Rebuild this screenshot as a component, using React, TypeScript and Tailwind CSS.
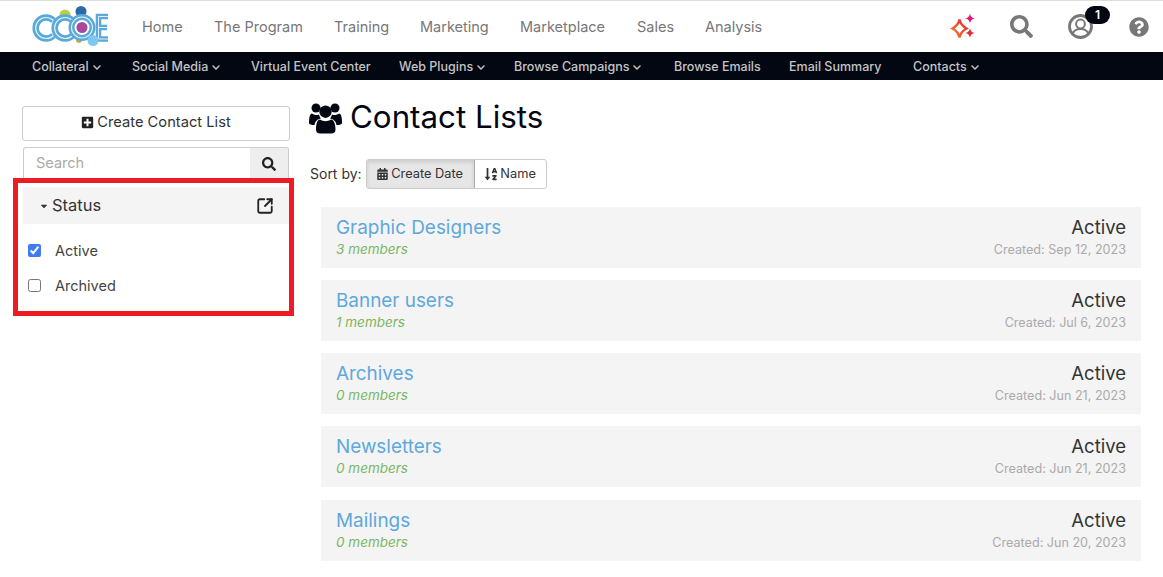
import { FaPlusSquare, FaSearch, FaCalendarAlt, FaSortAlphaDown, FaQuestionCircle, FaChevronDown, FaCaretDown } from "react-icons/fa";
import { LuSquareArrowOutUpRight } from "react-icons/lu";

const font = { fontFamily: "Inter, 'Noto Sans', sans-serif" };

function Logo() {
  const cArc = (cx: number) => `M ${cx + 7.5} 16.5 A 10.500 10.500 0 1 0 ${cx + 7.5} 31.500`;
  const e = "M78 12.500 H68.500 V35 H78 M68.500 23.500 H77";
  return (
    <svg width="80" height="46" viewBox="0 0 80 46" className="block">
      <circle cx="35" cy="11" r="5.500" fill="#b8cf3f" />
      <circle cx="51" cy="7.500" r="5.500" fill="#2b6aa6" />
      <circle cx="49" cy="36" r="3" fill="#d9a84a" />
      <g fill="none">
        <path d={cArc(16)} stroke="#5aa9d8" strokeWidth="6.500" />
        <path d={cArc(16)} stroke="#dff0fa" strokeWidth="1.200" />
        <path d={cArc(35)} stroke="#5aa9d8" strokeWidth="6.500" />
        <path d={cArc(35)} stroke="#dff0fa" strokeWidth="1.200" />
        <circle cx="52" cy="23.500" r="10.500" stroke="#5aa9d8" strokeWidth="6" />
        <circle cx="52" cy="23.500" r="10.500" stroke="#dff0fa" strokeWidth="1.100" />
        <path d={e} stroke="#5aa9d8" strokeWidth="5.500" />
        <path d={e} stroke="#dff0fa" strokeWidth="1" />
      </g>
      <circle cx="52" cy="23.500" r="5.500" fill="#a8479b" />
      <circle cx="63" cy="36.500" r="5.500" fill="#7cc8f0" />
    </svg>
  );
}

function Sparkle() {
  return (
    <svg width="27" height="26" viewBox="0 0 27 26" className="block">
      <defs>
        <linearGradient id="sp" x1="0" y1="1" x2="1" y2="0">
          <stop offset="0" stopColor="#f47a20" />
          <stop offset="1" stopColor="#e5283a" />
        </linearGradient>
      </defs>
      <path d="M9.500 5.500 C10.500 10 12 12 16.500 14.500 C12 17 10.500 19 9.500 23.500 C8.500 19 7 17 2.500 14.500 C7 12 8.500 10 9.500 5.500 Z" fill="none" stroke="url(#sp)" strokeWidth="2.400" />
      <path d="M20 -0.500 C20.700 2.800 21.700 3.800 25 4.500 C21.700 5.200 20.700 6.200 20 9.500 C19.300 6.200 18.300 5.200 15 4.500 C18.300 3.800 19.300 2.800 20 -0.500 Z" fill="#ee1173" />
      <path d="M20 14 C20.700 17.300 21.700 18.300 25 19 C21.700 19.700 20.700 20.700 20 24 C19.300 20.700 18.300 19.700 15 19 C18.300 18.300 19.300 17.300 20 14 Z" fill="#e5283a" />
    </svg>
  );
}

function UserIcon() {
  return (
    <svg width="25" height="25" viewBox="0 0 25 25" className="block">
      <circle cx="12.500" cy="12.500" r="11" fill="none" stroke="#777777" strokeWidth="2.800" />
      <circle cx="12.500" cy="10" r="4.400" fill="none" stroke="#777777" strokeWidth="2" />
      <path d="M4.500 20 C6 15.500 9 15 12.500 15 C16 15 19 15.500 20.500 20" fill="none" stroke="#777777" strokeWidth="2" />
    </svg>
  );
}

function UsersIcon() {
  return (
    <svg width="33" height="31" viewBox="0 0 33 31" className="block shrink-0" fill="#030712">
      <circle cx="7" cy="5" r="4.500" />
      <circle cx="26" cy="5" r="4.500" />
      <path d="M0 20 C0 14 1 10.500 3 10.500 C5 12 7.500 12.500 10 11.500 C10.300 13 11 14.500 12 15.500 C8.500 16 6 18.500 5.500 22 C2.500 22 0 21.500 0 20 Z" />
      <path d="M33 20 C33 14 32 10.500 30 10.500 C28 12 25.500 12.500 23 11.500 C22.700 13 22 14.500 21 15.500 C24.500 16 27 18.500 27.500 22 C30.500 22 33 21.500 33 20 Z" />
      <circle cx="16.500" cy="8.700" r="6.200" />
      <path d="M7 26.500 C7 20.500 8.500 16.500 11 16.500 C14.500 18.800 18.500 18.800 22 16.500 C24.500 16.500 26.500 20.500 26.500 26.500 C26.500 29 25 30.500 22.500 30.500 L11 30.500 C8.500 30.500 7 29 7 26.500 Z" />
    </svg>
  );
}

const topItems = [
  ["Home", "w-[72px]"],
  ["The Program", "w-[120px]"],
  ["Training", "w-[86px]"],
  ["Marketing", "w-[100px]"],
  ["Marketplace", "w-[117px]"],
  ["Sales", "w-[68px]"],
  ["Analysis", "w-[70px]"],
];

const subItems: [string, boolean, string][] = [
  ["Collateral", true, "w-[100px]"],
  ["Social Media", true, "w-[119px]"],
  ["Virtual Event Center", false, "w-[148px]"],
  ["Web Plugins", true, "w-[115px]"],
  ["Browse Campaigns", true, "w-[160px]"],
  ["Browse Emails", false, "w-[115px]"],
  ["Email Summary", false, "w-[124px]"],
  ["Contacts", true, "w-[80px]"],
];

const lists = [
  ["Graphic Designers", "3 members", "Created: Sep 12, 2023"],
  ["Banner users", "1 members", "Created: Jul 6, 2023"],
  ["Archives", "0 members", "Created: Jun 21, 2023"],
  ["Newsletters", "0 members", "Created: Jun 21, 2023"],
  ["Mailings", "0 members", "Created: Jun 20, 2023"],
];

export default function App() {
  return (
    <div style={font} className="relative h-[577px] w-[1163px] overflow-hidden bg-white">
      <header className="flex h-[52px] items-center border-t border-[#dddddd] bg-white">
        <div className="ml-[30px] w-[112px]"><Logo /></div>
        <nav className="flex items-center text-[14.5px] text-[#777777]">
          {topItems.map(([t, w]) => (
            <span key={t} className={`${w} whitespace-nowrap`}>{t}</span>
          ))}
        </nav>
        <div className="ml-auto flex items-center">
          <Sparkle />
          <FaSearch className="ml-[33px] h-[23px] w-[23px] text-[#777777]" />
          <div className="relative ml-[35px]">
            <UserIcon />
            <span className="absolute left-[17px] top-[-8px] flex h-[18px] w-[25px] items-center justify-center rounded-full bg-[#030712] text-[12px] font-semibold text-white">1</span>
          </div>
          <FaQuestionCircle className="ml-[36px] mr-[14px] h-[20px] w-[20px] text-[#777777]" />
        </div>
      </header>
      <nav className="flex h-[28px] items-center bg-[#030712] pl-[32px] pt-[2px] text-[12.5px] font-medium text-[#c4c4c4]">
        {subItems.map(([t, c, w]) => (
          <span key={t} className={`${w} flex items-center gap-[3px] whitespace-nowrap`}>
            {t}
            {c && <FaChevronDown className="h-[9px] w-[10px]" />}
          </span>
        ))}
      </nav>

      <div className="flex pl-[22px] pt-[26px]">
        <aside className="w-[268px] shrink-0">
          <button className="flex h-[35px] w-full items-center justify-center gap-[3px] rounded-[3px] border border-[#cccccc] pb-[2px] text-[14.7px] text-[#333333]">
            <FaPlusSquare className="h-[13px] w-[13px] text-[#222222]" />
            Create Contact List
          </button>
          <div className="ml-px mt-[6px] flex h-[34px] w-[266px] overflow-hidden rounded-t-[3px] border border-b-0 border-[#cccccc]">
            <div className="flex flex-1 items-center pb-[3px] pl-[12px] text-[14.5px] text-[#aaaaaa]">Search</div>
            <div className="flex w-[38px] items-center justify-center bg-[#eeeeee] pb-[2px]">
              <FaSearch className="h-[14px] w-[14px] text-[#222222]" />
            </div>
          </div>
          <div className="ml-px mt-[6px] flex h-[37px] w-[266px] items-center justify-between bg-[#f4f4f4] pl-[16px] pr-[15px]">
            <span className="flex items-center gap-[3px] text-[16.5px] text-[#333333]">
              <FaCaretDown className="h-[10px] w-[10px]" />
              Status
            </span>
            <LuSquareArrowOutUpRight className="h-[18px] w-[18px] text-[#222222]" strokeWidth={2.4} />
          </div>
          <label className="ml-[6px] mt-[18px] flex h-[17px] items-center text-[14.5px] text-[#444444]">
            <input type="checkbox" defaultChecked className="h-[13px] w-[13px] accent-[#3f7cf4]" />
            <span className="ml-[14px]">Active</span>
          </label>
          <label className="ml-[6px] mt-[18px] flex h-[17px] items-center text-[14.5px] text-[#444444]">
            <input type="checkbox" className="h-[13px] w-[13px]" />
            <span className="ml-[14px]">Archived</span>
          </label>
        </aside>

        <main className="ml-[19px] flex-1">
          <h1 className="-mt-[5px] flex h-[34px] items-center gap-[8px] text-[31.300px] font-normal leading-none text-[#030712]">
            <UsersIcon />
            Contact Lists
          </h1>
          <div className="ml-px mt-[24px] flex h-[30px] items-center text-[14px] text-[#333333]">
            <span className="mr-[4px] pb-px">Sort by:</span>
            <div className="flex h-[30px] items-stretch rounded-[3px] border border-[#cccccc] text-[12.8px]">
              <span className="flex w-[108px] items-center justify-center gap-[3px] border-r border-[#aaaaaa] bg-[#e6e6e6] shadow-[inset_0_2px_4px_rgba(0,0,0,0.125)]">
                <FaCalendarAlt className="h-[12px] w-[11px]" />
                Create Date
              </span>
              <span className="flex w-[71px] items-center justify-center gap-[2px]">
                <FaSortAlphaDown className="h-[14px] w-[14px]" />
                Name
              </span>
            </div>
          </div>
          <div className="ml-[12px] mt-[18px] flex w-[820px] flex-col gap-[12px]">
            {lists.map(([name, members, created], i) => (
              <div key={name} className={`${i === 4 ? "mt-px" : ""} flex h-[61px] justify-between bg-[#f4f4f4] pl-[15px] pr-[15px] pt-[8px]`}>
                <div className="pt-px">
                  <div className="text-[18.900px] leading-[24px] text-[#5fa8dc]">{name}</div>
                  <div className="mt-[1px] text-[13.500px] italic leading-[16px] text-[#7ab661]">{members}</div>
                </div>
                <div className="text-right">
                  <div className="text-[18.500px] font-normal leading-[24px] text-[#333333]">Active</div>
                  <div className="mt-[3px] text-[12.600px] leading-[16px] text-[#aaaaaa]">{created}</div>
                </div>
              </div>
            ))}
          </div>
        </main>
      </div>
      <div className="pointer-events-none absolute left-[13px] top-[178px] h-[138px] w-[281px] border-[5px] border-[#ed1c24]" />
    </div>
  );
}
